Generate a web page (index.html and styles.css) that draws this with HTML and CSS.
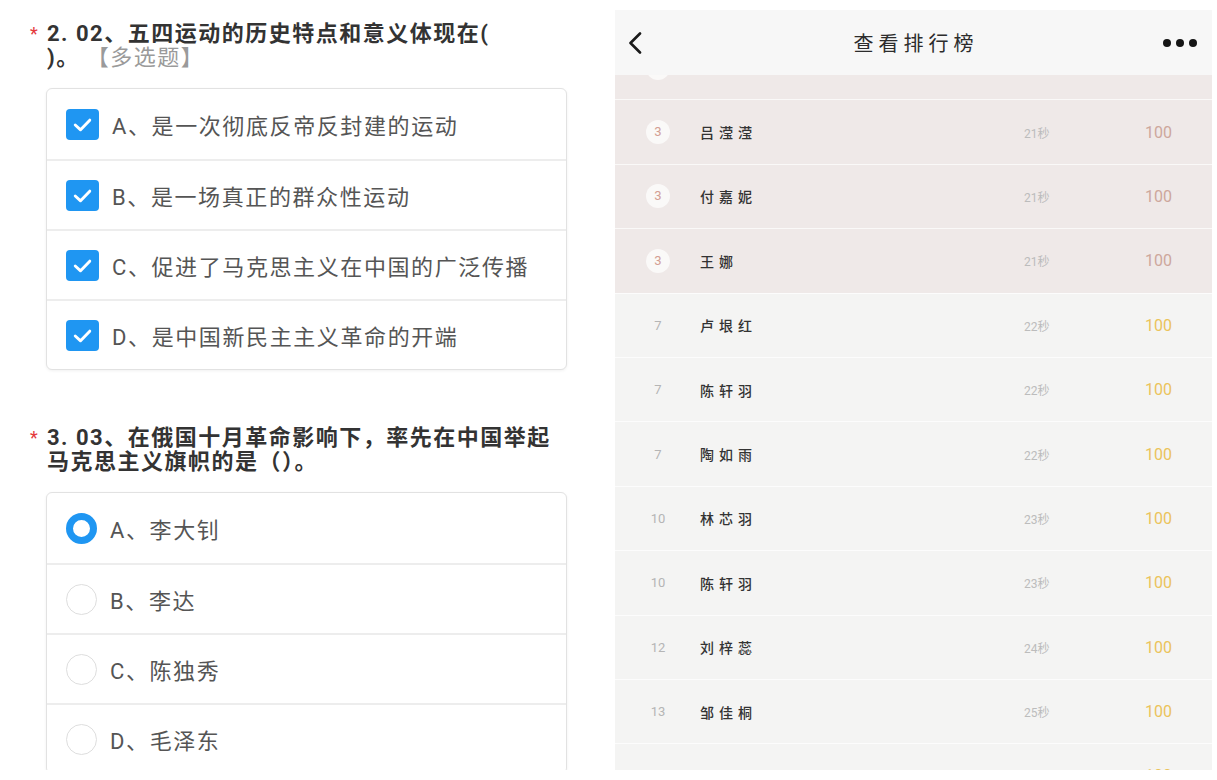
FILE: index.html
```html
<!DOCTYPE html>
<html lang="zh-CN">

<head>
  <meta charset="UTF-8">
  <meta name="viewport" content="width=device-width, initial-scale=1.0">
  <title>答题与排行榜</title>
  <link rel="stylesheet" href="styles.css">
</head>

<body>
  <div class="page">

    <!-- Left: quiz -->
    <div class="quiz">
      <div class="question">
        <div class="q-title">
          <span class="req">*</span>
          <div class="q-text">2. 02、五四运动的历史特点和意义体现在(<br>)。 <span class="q-type">【多选题】</span></div>
        </div>
        <div class="options">
          <div class="option">
            <span class="checkbox"><svg viewBox="0 0 32 32"><polyline points="8.5,16.5 14,21.5 23.5,11.5"/></svg></span>
            <span class="opt-label">A、是一次彻底反帝反封建的运动</span>
          </div>
          <div class="option">
            <span class="checkbox"><svg viewBox="0 0 32 32"><polyline points="8.5,16.5 14,21.5 23.5,11.5"/></svg></span>
            <span class="opt-label">B、是一场真正的群众性运动</span>
          </div>
          <div class="option">
            <span class="checkbox"><svg viewBox="0 0 32 32"><polyline points="8.5,16.5 14,21.5 23.5,11.5"/></svg></span>
            <span class="opt-label">C、促进了马克思主义在中国的广泛传播</span>
          </div>
          <div class="option">
            <span class="checkbox"><svg viewBox="0 0 32 32"><polyline points="8.5,16.5 14,21.5 23.5,11.5"/></svg></span>
            <span class="opt-label">D、是中国新民主主义革命的开端</span>
          </div>
        </div>
      </div>

      <div class="question q-next">
        <div class="q-title">
          <span class="req">*</span>
          <div class="q-text">3. 03、在俄国十月革命影响下，率先在中国举起<br>马克思主义旗帜的是（）。</div>
        </div>
        <div class="options">
          <div class="option">
            <span class="radio selected"></span>
            <span class="opt-label">A、李大钊</span>
          </div>
          <div class="option">
            <span class="radio"></span>
            <span class="opt-label">B、李达</span>
          </div>
          <div class="option">
            <span class="radio"></span>
            <span class="opt-label">C、陈独秀</span>
          </div>
          <div class="option">
            <span class="radio"></span>
            <span class="opt-label">D、毛泽东</span>
          </div>
        </div>
      </div>
    </div>

    <!-- Right: ranking -->
    <div class="board">
      <div class="board-head">
        <span class="head-side">
          <svg class="back-icon" viewBox="0 0 14 22"><polyline points="12,1.5 2.5,11 12,20.5"/></svg>
        </span>
        <span class="head-title">查看排行榜</span>
        <span class="head-side head-right">
          <svg class="more-icon" viewBox="0 0 34 8"><circle cx="4" cy="4" r="4"/><circle cx="17" cy="4" r="4"/><circle cx="30" cy="4" r="4"/></svg>
        </span>
      </div>
      <div class="board-list">
        <div class="rows">
          <!-- row scrolled under the header, only its badge edge shows -->
          <div class="row top"><span class="rank"><i></i></span></div>
          <div class="row top"><span class="rank"><i>3</i></span><span class="name">吕滢滢</span><span class="time">21秒</span><span class="score">100</span></div>
          <div class="row top"><span class="rank"><i>3</i></span><span class="name">付嘉妮</span><span class="time">21秒</span><span class="score">100</span></div>
          <div class="row top"><span class="rank"><i>3</i></span><span class="name">王娜</span><span class="time">21秒</span><span class="score">100</span></div>
          <div class="row"><span class="rank">7</span><span class="name">卢垠红</span><span class="time">22秒</span><span class="score">100</span></div>
          <div class="row"><span class="rank">7</span><span class="name">陈轩羽</span><span class="time">22秒</span><span class="score">100</span></div>
          <div class="row"><span class="rank">7</span><span class="name">陶如雨</span><span class="time">22秒</span><span class="score">100</span></div>
          <div class="row"><span class="rank">10</span><span class="name">林芯羽</span><span class="time">23秒</span><span class="score">100</span></div>
          <div class="row"><span class="rank">10</span><span class="name">陈轩羽</span><span class="time">23秒</span><span class="score">100</span></div>
          <div class="row"><span class="rank">12</span><span class="name">刘梓蕊</span><span class="time">24秒</span><span class="score">100</span></div>
          <div class="row"><span class="rank">13</span><span class="name">邹佳桐</span><span class="time">25秒</span><span class="score">100</span></div>
          <div class="row"><span class="rank">14</span><span class="name">李林杉</span><span class="time">25秒</span><span class="score">100</span></div>
        </div>
      </div>
    </div>

  </div>
</body>

</html>
```

FILE: styles.css
```css
* {
  margin: 0;
  padding: 0;
  box-sizing: border-box;
}

body {
  background-color: #fff;
  font-family: Roboto, "Noto Sans CJK SC", sans-serif;
}

.page {
  display: flex;
  height: 770px;
  overflow: hidden;
}

/* Quiz */
.quiz {
  width: 615px;
  flex-shrink: 0;
  padding: 22px 0 0 30px;
}

.q-title {
  display: flex;
  color: #333;
  font-size: 22px;
  font-weight: 700;
  line-height: 24px;
  letter-spacing: 1.5px;
}

.req {
  width: 17px;
  flex-shrink: 0;
  color: #e4393c;
  font-size: 18px;
  font-weight: 400;
}

.q-type {
  color: #9a9a9a;
  font-weight: 400;
}

.options {
  width: 521px;
  margin: 18px 0 0 16px;
  border: 1px solid #e2e2e2;
  border-radius: 6px;
  box-shadow: 0 1px 3px rgba(0, 0, 0, 0.06);
  background-color: #fff;
}

.option {
  display: flex;
  align-items: center;
  gap: 13px;
  height: 70px;
  padding-left: 19px;
  border-top: 2px solid #ededed;
}

.option:first-child {
  border-top: none;
}

.opt-label {
  color: #555;
  font-size: 22px;
  letter-spacing: 1.6px;
}

.checkbox {
  width: 33px;
  height: 31px;
  border-radius: 4px;
  background-color: #1f96f2;
  display: flex;
}

.checkbox svg {
  width: 100%;
  height: 100%;
  fill: none;
  stroke: #fff;
  stroke-width: 3;
  stroke-linecap: round;
  stroke-linejoin: round;
}

.radio {
  width: 31px;
  height: 31px;
  border-radius: 50%;
  border: 1.5px solid #dedede;
}

.radio.selected {
  border: 7px solid #1f96f2;
}

.q-next {
  margin-top: 56px;
}

/* Ranking board */
.board {
  width: 597px;
  height: 760px;
  margin-top: 10px;
  display: flex;
  flex-direction: column;
  background-color: #f4f4f3;
  overflow: hidden;
}

.board-head {
  height: 65px;
  flex-shrink: 0;
  display: flex;
  align-items: center;
  background-color: #f7f7f7;
}

.head-side {
  width: 60px;
  display: flex;
  align-items: center;
  padding-left: 13px;
}

.head-right {
  justify-content: flex-end;
  padding: 0 15px 0 0;
}

.back-icon {
  width: 14px;
  height: 22px;
  fill: none;
  stroke: #1a1a1a;
  stroke-width: 2.6;
  stroke-linecap: round;
  stroke-linejoin: round;
}

.more-icon {
  width: 34px;
  height: 8px;
  fill: #151515;
}

.head-title {
  flex: 1;
  text-align: center;
  font-size: 20px;
  color: #2c2c2c;
  letter-spacing: 5px;
  padding-left: 5px;
}

.board-list {
  flex: 1;
  overflow: hidden;
}

/* list is scrolled a little */
.rows {
  margin-top: -40px;
}

.row {
  display: flex;
  align-items: center;
  height: 64.4px;
  padding: 0 40px 0 31px;
  border-top: 1px solid rgba(255, 255, 255, 0.7);
  font-size: 13px;
}

.row.top {
  background-color: #efe9e8;
}

.rank {
  width: 24px;
  text-align: center;
  color: #b5b5b5;
  font-size: 13px;
}

.rank i {
  display: block;
  width: 24px;
  height: 24px;
  line-height: 24px;
  border-radius: 50%;
  background-color: rgba(255, 255, 255, 0.7);
  color: #d39e93;
  font-style: normal;
}

.name {
  flex: 1;
  margin-left: 30px;
  color: #333;
  font-size: 14px;
  font-weight: 500;
  letter-spacing: 5px;
}

.time {
  width: 88px;
  color: #bcbcbc;
  font-size: 12px;
}

.score {
  width: 60px;
  text-align: right;
  color: #ebc35b;
  font-size: 16px;
}

.row.top .score {
  color: #cda79c;
}
```
